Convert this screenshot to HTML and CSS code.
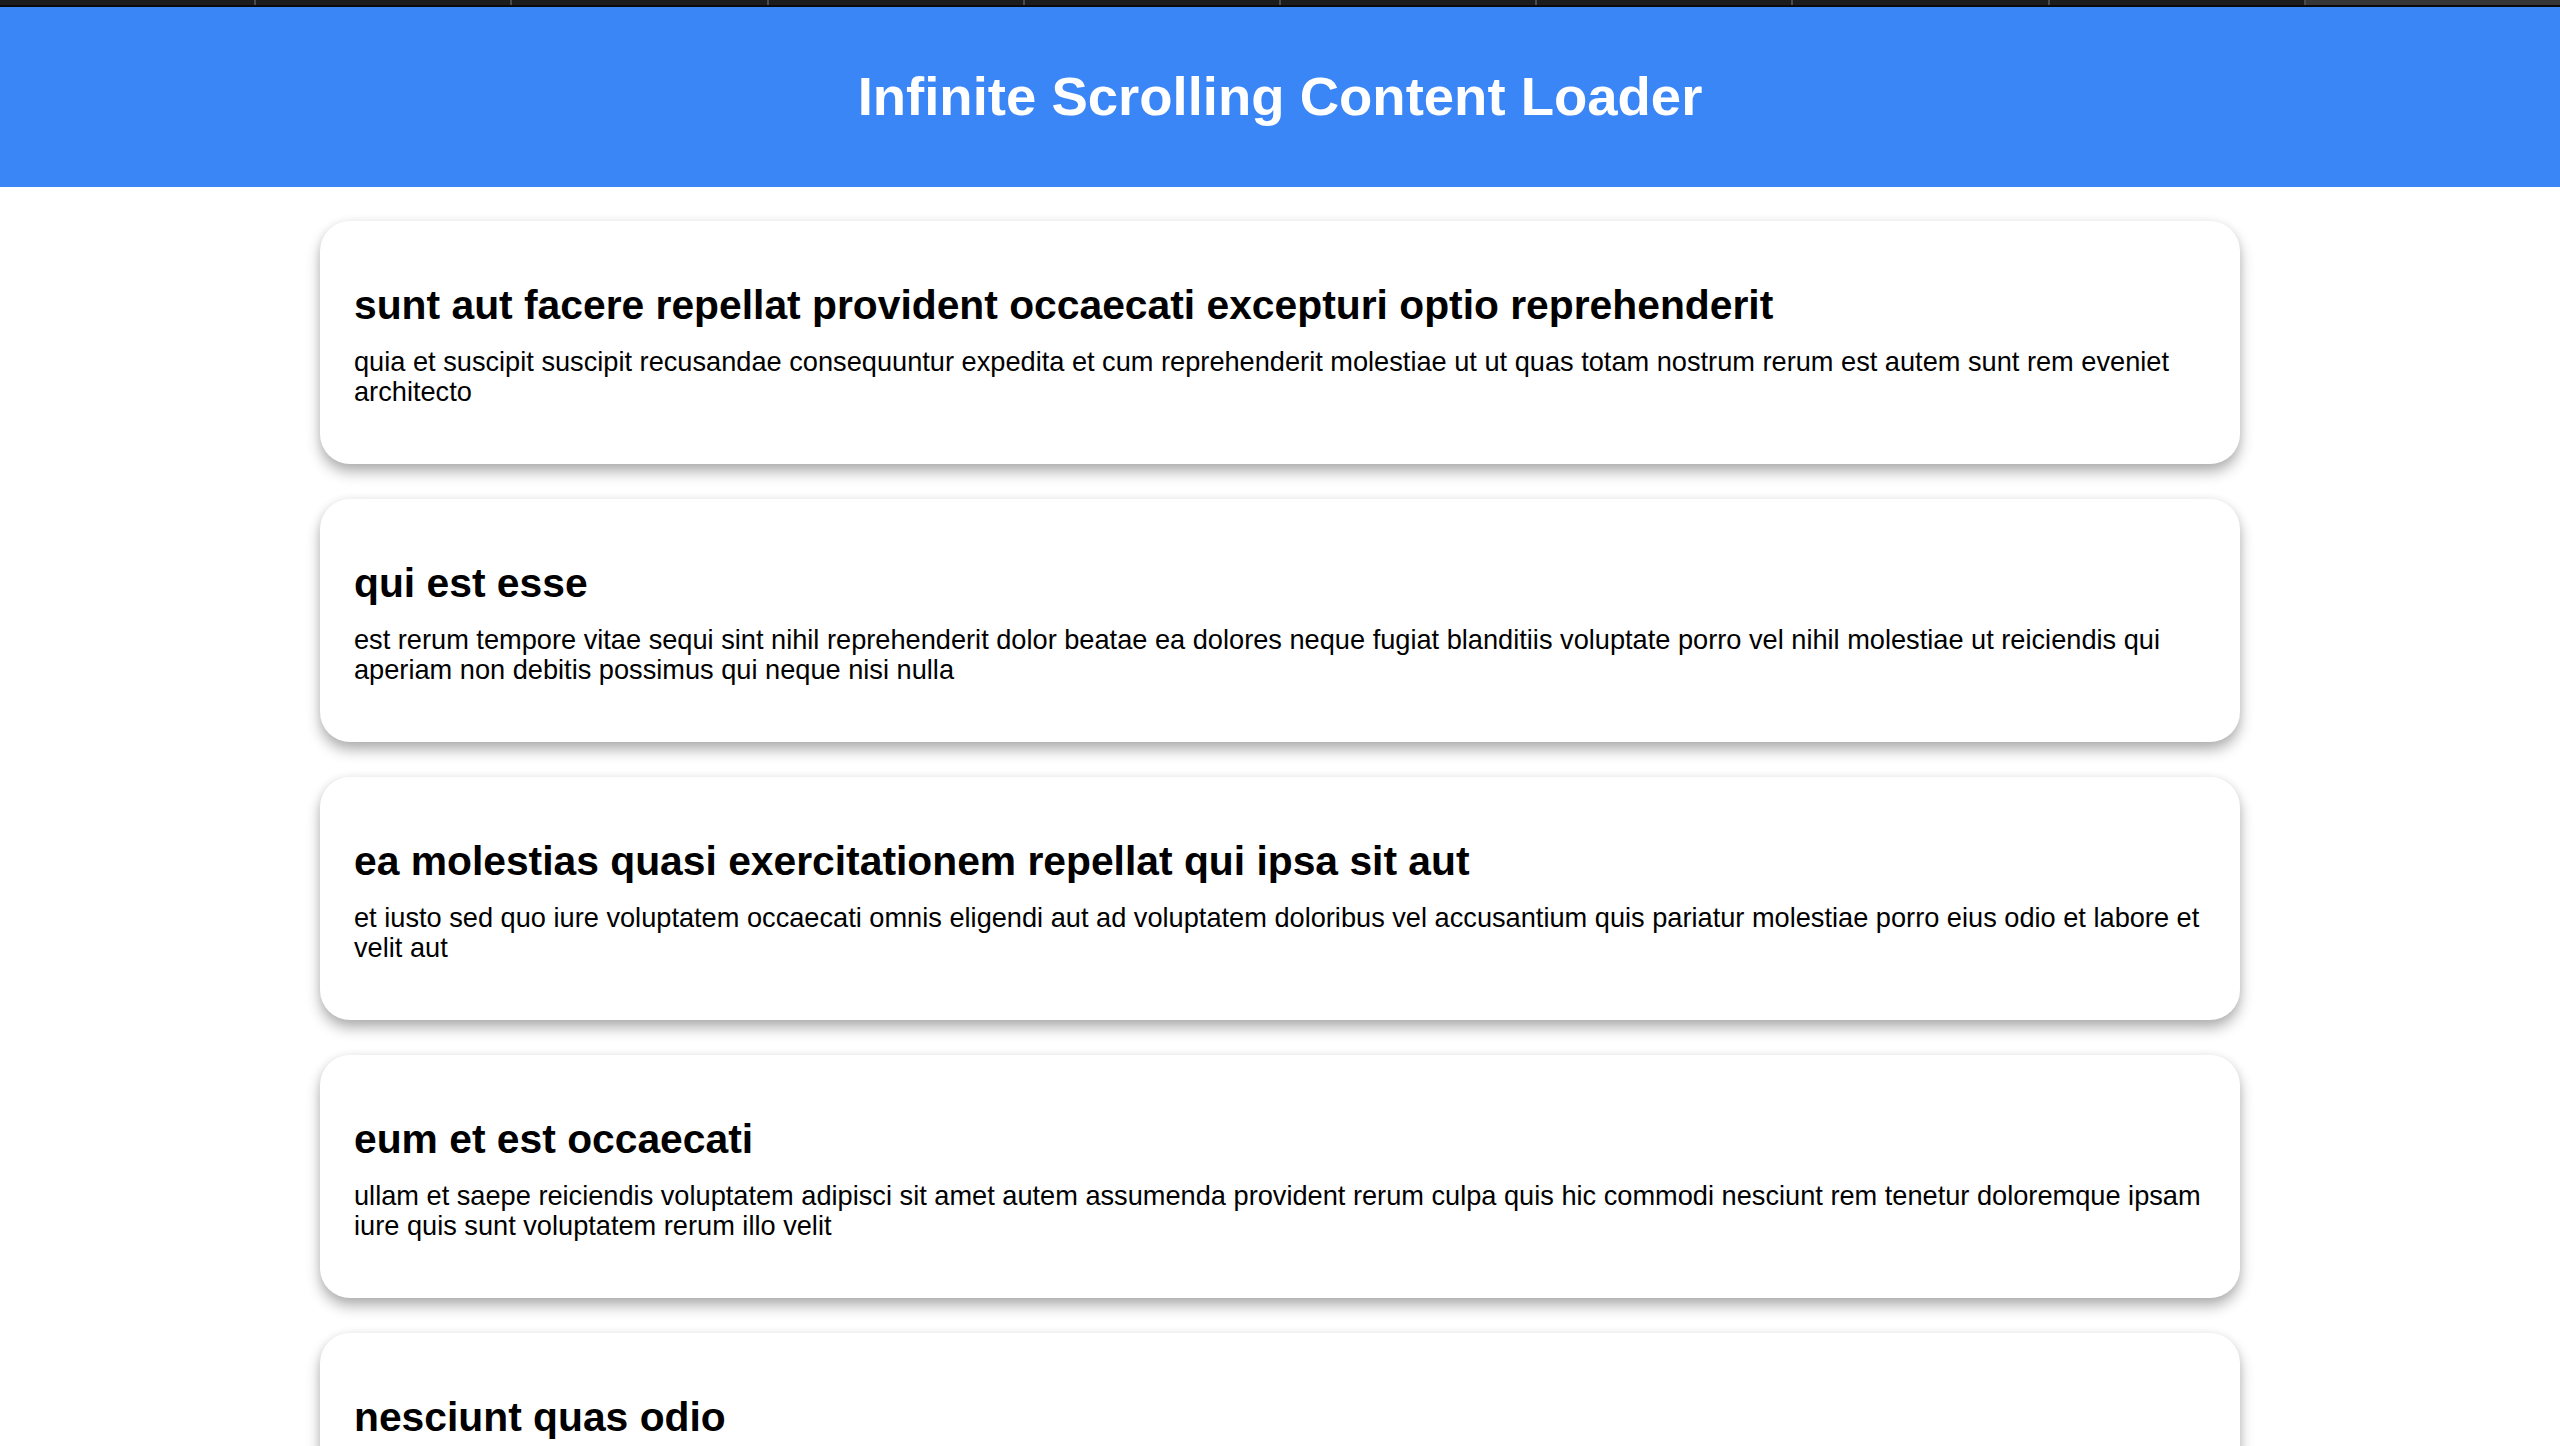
FILE: index.html
```html
<!DOCTYPE html>
<html lang="en">
<head>
<meta charset="utf-8">
<title>Infinite Scrolling Content Loader</title>
<link rel="stylesheet" href="styles.css">
</head>
<body>
<div class="tabstrip">
  <div class="tab"></div><div class="tab"></div><div class="tab"></div><div class="tab"></div><div class="tab"></div>
  <div class="tab"></div><div class="tab"></div><div class="tab"></div><div class="tab"></div><div class="tab active"></div>
</div>
<header class="site-header">
  <h1 class="site-title">Infinite Scrolling Content Loader</h1>
</header>
<main class="feed">
  <article class="post">
    <h2 class="post-title">sunt aut facere repellat provident occaecati excepturi optio reprehenderit</h2>
    <p class="post-body">quia et suscipit suscipit recusandae consequuntur expedita et cum reprehenderit molestiae ut ut quas totam nostrum rerum est autem sunt rem eveniet architecto</p>
  </article>
  <article class="post">
    <h2 class="post-title">qui est esse</h2>
    <p class="post-body">est rerum tempore vitae sequi sint nihil reprehenderit dolor beatae ea dolores neque fugiat blanditiis voluptate porro vel nihil molestiae ut reiciendis qui aperiam non debitis possimus qui neque nisi nulla</p>
  </article>
  <article class="post">
    <h2 class="post-title">ea molestias quasi exercitationem repellat qui ipsa sit aut</h2>
    <p class="post-body">et iusto sed quo iure voluptatem occaecati omnis eligendi aut ad voluptatem doloribus vel accusantium quis pariatur molestiae porro eius odio et labore et velit aut</p>
  </article>
  <article class="post">
    <h2 class="post-title">eum et est occaecati</h2>
    <p class="post-body">ullam et saepe reiciendis voluptatem adipisci sit amet autem assumenda provident rerum culpa quis hic commodi nesciunt rem tenetur doloremque ipsam iure quis sunt voluptatem rerum illo velit</p>
  </article>
  <article class="post">
    <h2 class="post-title">nesciunt quas odio</h2>
    <p class="post-body">repudiandae veniam quaerat sunt sed alias aut fugiat sit autem sed est voluptatem omnis possimus esse voluptatibus quis est aut tenetur dolor neque</p>
  </article>
</main>
</body>
</html>
```
FILE: styles.css
```css
html {
  scrollbar-width: none;
}
html::-webkit-scrollbar {
  display: none;
}
body {
  margin: 0;
  background: #ffffff;
  font-family: "Liberation Sans", Arial, Helvetica, sans-serif;
  color: #000;
}
.tabstrip {
  display: flex;
  height: 5px;
  background: #1c1c1c;
  border-bottom: 2px solid #0a0a0a;
}
.tab {
  flex: 1;
  border-right: 2px solid #4a4a4a;
}
.tab.active {
  background: #363636;
  border-right: none;
}
.site-header {
  background: #3b86f6;
  height: 180px;
  display: flex;
  align-items: center;
  justify-content: center;
}
.site-title {
  margin: 0 0 1px;
  color: #ffffff;
  font-size: 54.5px;
  font-weight: 700;
  line-height: 62px;
}
.feed {
  width: 1920px;
  margin: 34px auto 0;
  display: flex;
  flex-direction: column;
  gap: 35px;
}
.post {
  background: #ffffff;
  border-radius: 30px;
  padding: 34px;
  height: 243px;
  box-sizing: border-box;
  box-shadow: 0 8px 14px rgba(0, 0, 0, 0.3), 0 0 8px rgba(0, 0, 0, 0.06);
}
.post-title {
  margin: 27px 0 19px;
  font-size: 40.8px;
  line-height: 46px;
  font-weight: 700;
}
.post-body {
  margin: 0;
  font-size: 27.2px;
  line-height: 30px;
}
```
